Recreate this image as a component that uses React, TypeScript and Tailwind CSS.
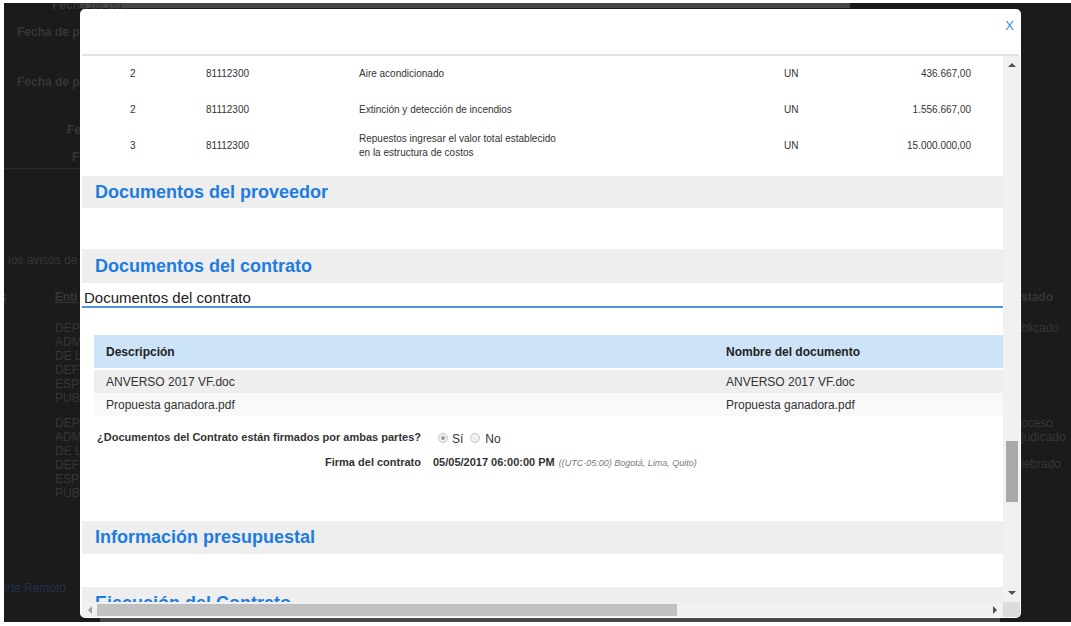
import React from 'react';

const items = [
  { n: '2', code: '81112300', desc: ['Aire acondicionado'], unit: 'UN', value: '436.667,00', h: 'h-[36px]' },
  { n: '2', code: '81112300', desc: ['Extinción y detección de incendios'], unit: 'UN', value: '1.556.667,00', h: 'h-[35px]' },
  {
    n: '3',
    code: '81112300',
    desc: ['Repuestos ingresar el valor total establecido', 'en la estructura de costos'],
    unit: 'UN',
    value: '15.000.000,00',
    h: 'h-[37px]',
  },
];

const documents = [
  { desc: 'ANVERSO 2017 VF.doc', name: 'ANVERSO 2017 VF.doc', bg: 'bg-[#eeeeee]' },
  { desc: 'Propuesta ganadora.pdf', name: 'Propuesta ganadora.pdf', bg: 'bg-[#f9f9f9]' },
];

const SectionBand: React.FC<{ title: string; height?: string }> = ({ title, height = 'h-[33px]' }) => (
  <div className={`${height} shrink-0 bg-[#eeeeee] flex items-center pl-[13px]`}>
    <span className="text-[18px] leading-[21px] font-bold text-[#1e7ce0] whitespace-nowrap">{title}</span>
  </div>
);

const Radio: React.FC<{ checked?: boolean }> = ({ checked }) => (
  <span className="inline-flex h-[10px] w-[10px] items-center justify-center rounded-full border border-[#c6c6c6] bg-[#f0f0f0]">
    {checked && <span className="h-[4px] w-[4px] rounded-full bg-[#9c9c9c]" />}
  </span>
);

const Arrow: React.FC<{ dir: 'up' | 'down' | 'left' | 'right' }> = ({ dir }) => {
  if (dir === 'up')
    return <span className="h-0 w-0 border-x-[4px] border-b-[4px] border-x-transparent border-b-[#505050]" />;
  if (dir === 'down')
    return <span className="h-0 w-0 border-x-[4px] border-t-[4px] border-x-transparent border-t-[#505050]" />;
  if (dir === 'left')
    return <span className="h-0 w-0 border-y-[4px] border-r-[4px] border-y-transparent border-r-[#a0a0a0]" />;
  return <span className="h-0 w-0 border-y-[4px] border-l-[4px] border-y-transparent border-l-[#505050]" />;
};

// The page behind the dark overlay, mostly hidden by the modal
const BackgroundPage = () => (
  <div className="h-full flex flex-col text-[12px] leading-[14px] text-[#363636]">
    <div className="h-[5px] shrink-0 ml-[76px] w-[770px] bg-[#474747]" />
    <div className="flex-1 flex min-h-0">
      <div className="w-[76px] shrink-0 whitespace-nowrap">
        <div className="-mt-[10px] pl-[48px] font-bold">Fecha de pu</div>
        <div className="mt-[13px] pl-[13px] font-bold">Fecha de p</div>
        <div className="mt-[36px] pl-[13px] font-bold">Fecha de p</div>
        <div className="mt-[34px] pl-[63px] font-bold">Fe</div>
        <div className="mt-[13px] pl-[68px] font-bold">F</div>
        <div className="mt-[4px] h-px bg-[#2b2b2b]" />
        <div className="mt-[84px] pl-[4px]">los avisos de</div>
        <div className="mt-[23px] flex font-bold">
          <span className="-ml-[4px] underline">s</span>
          <span className="ml-[48px] underline">Enti</span>
        </div>
        <div className="mt-[17px] pl-[51px]">
          <div>DEP</div>
          <div>ADM</div>
          <div>DE L</div>
          <div>DEF</div>
          <div>ESP</div>
          <div>PUB</div>
        </div>
        <div className="mt-[11px] pl-[51px]">
          <div>DEP</div>
          <div>ADM</div>
          <div>DE L</div>
          <div>DEF</div>
          <div>ESP</div>
          <div>PUB</div>
        </div>
        <div className="mt-[81px] -ml-[4px] text-[#22324c]">orte Remoto</div>
      </div>
      <div className="flex-1" />
      <div className="w-[50px] shrink-0 whitespace-nowrap">
        <div className="mt-[282px] font-bold">stado</div>
        <div className="mt-[17px]">blicado</div>
        <div className="mt-[81px]">
          <div>oceso</div>
          <div>judicado</div>
        </div>
        <div className="mt-[13px]">lebrado</div>
      </div>
    </div>
    <div className="h-[5px] shrink-0 ml-[96px] w-[900px] bg-[#474747]" />
  </div>
);

export default function App() {
  return (
    <div className="w-[1071px] h-[626px] bg-white pl-[4px] pt-[3px] pb-[4px] font-['Liberation_Sans',Arial,sans-serif] overflow-hidden">
      <div className="relative h-full bg-[#1b1b1b] overflow-hidden">
        <BackgroundPage />

        {/* Modal */}
        <div className="absolute left-[76px] top-[6px] w-[941px] h-[609px] bg-white rounded-[5px] flex flex-col overflow-hidden">
          <div className="h-[47px] shrink-0 mx-[2px] border-b-2 border-b-[#e2e2e2] flex justify-end pt-[9px] pr-[5px]">
            <span className="text-[13px] leading-[15px] text-[#3d8de0]">X</span>
          </div>

          <div className="flex-1 min-h-0 flex flex-col pl-[2px] pr-[1px] pb-[1px]">
            <div className="flex-1 min-h-0 flex">
              {/* Scrolled content */}
              <div className="w-[921px] shrink-0 overflow-hidden flex flex-col text-[#333333]">
                <div className="mb-[12px]">
                  {items.map((item, i) => (
                    <div
                      key={i}
                      className={`${item.h} grid grid-cols-[124px_153px_425px_80px_1fr] items-center text-[10px] leading-[14px]`}
                    >
                      <span className="pl-[48px]">{item.n}</span>
                      <span>{item.code}</span>
                      <span>
                        {item.desc.map((line, j) => (
                          <span key={j} className="block">
                            {line}
                          </span>
                        ))}
                      </span>
                      <span>{item.unit}</span>
                      <span className="text-right pr-[32px]">{item.value}</span>
                    </div>
                  ))}
                </div>

                <SectionBand title="Documentos del proveedor" height="h-[32px]" />
                <div className="h-[41px] shrink-0" />
                <SectionBand title="Documentos del contrato" height="h-[34px]" />

                <div className="h-[23px] shrink-0 flex items-end pl-[2px] text-[15px] leading-[17px] text-[#222222]">
                  Documentos del contrato
                </div>
                <div className="h-[2px] shrink-0 bg-[#4d94e2]" />

                <div className="mt-[27px] ml-[12px] shrink-0">
                  <div className="h-[33px] grid grid-cols-[620px_1fr] items-center pl-[12px] bg-[#cde3f7] text-[12px] font-bold text-[#222222]">
                    <span>Descripción</span>
                    <span>Nombre del documento</span>
                  </div>
                  <div className="mt-[2px]">
                    {documents.map((d, i) => (
                      <div
                        key={i}
                        className={`h-[23px] grid grid-cols-[620px_1fr] items-center pl-[12px] text-[12px] text-[#333333] ${d.bg}`}
                      >
                        <span>{d.desc}</span>
                        <span>{d.name}</span>
                      </div>
                    ))}
                  </div>
                </div>

                <div className="mt-[11px] h-[16px] shrink-0 grid grid-cols-[339px_1fr] items-center text-[11px]">
                  <span className="text-right font-bold whitespace-nowrap">
                    ¿Documentos del Contrato están firmados por ambas partes?
                  </span>
                  <span className="flex items-center pl-[17px]">
                    <Radio checked />
                    <span className="ml-[4px] mt-[3px] text-[12px]">Sí</span>
                    <span className="ml-[7px] flex">
                      <Radio />
                    </span>
                    <span className="ml-[5px] mt-[3px] text-[12px]">No</span>
                  </span>
                </div>

                <div className="mt-[11px] h-[16px] shrink-0 grid grid-cols-[339px_1fr] items-center text-[11px]">
                  <span className="text-right font-bold">Firma del contrato</span>
                  <span className="pl-[12px] whitespace-nowrap">
                    <span className="font-bold">05/05/2017 06:00:00 PM</span>
                    <span className="ml-[4px] text-[9px] italic text-[#7a7a7a]">((UTC-05:00) Bogotá, Lima, Quito)</span>
                  </span>
                </div>

                <div className="h-[51px] shrink-0" />
                <SectionBand title="Información presupuestal" />
                <div className="h-[33px] shrink-0" />
                <SectionBand title="Ejecución del Contrato" />
              </div>

              {/* Vertical scrollbar */}
              <div className="w-[17px] shrink-0 bg-[#f1f1f1] flex flex-col">
                <div className="h-[17px] flex items-center justify-center">
                  <Arrow dir="up" />
                </div>
                <div className="flex-1 flex justify-center">
                  <div className="mt-[368px] w-[12px] h-[61px] bg-[#a8a8a8]" />
                </div>
                <div className="h-[19px] flex items-center justify-center">
                  <Arrow dir="down" />
                </div>
              </div>
            </div>

            {/* Horizontal scrollbar */}
            <div className="h-[15px] shrink-0 flex">
              <div className="w-[921px] bg-[#f1f1f1] flex items-center">
                <div className="w-[15px] flex justify-center">
                  <Arrow dir="left" />
                </div>
                <div className="w-[580px] h-[12px] bg-[#c1c1c1]" />
                <div className="flex-1" />
                <div className="w-[17px] flex justify-center">
                  <Arrow dir="right" />
                </div>
              </div>
              <div className="w-[17px] bg-[#dcdcdc]" />
            </div>
          </div>
        </div>
      </div>
    </div>
  );
}
